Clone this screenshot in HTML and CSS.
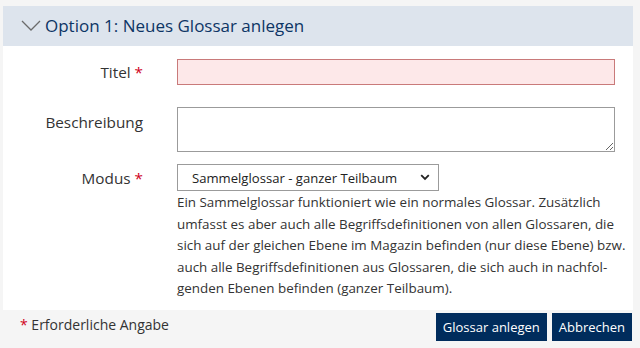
FILE: index.html
```html
<!DOCTYPE html>
<html lang="de">
<head>
<meta charset="utf-8">
<link rel="stylesheet" href="styles.css">
</head>
<body>
<div class="panel">
  <div class="panel-head">
    <svg class="chev" width="20" height="12" viewBox="0 0 20 12"><path d="M1 1 L10 10 L19 1" fill="none" stroke="#6b6b6b" stroke-width="1.3"/></svg>
    <h2 class="panel-title">Option 1: Neues Glossar anlegen</h2>
  </div>
  <div class="form">
    <label class="lbl lbl-title">Titel <span class="req">*</span></label>
    <div class="field"><input class="inp inp-error" type="text"></div>
    <label class="lbl lbl-desc">Beschreibung</label>
    <div class="field"><textarea class="ta"></textarea></div>
    <label class="lbl lbl-mode">Modus <span class="req">*</span></label>
    <div class="field">
      <div class="sel">
        <span>Sammelglossar - ganzer Teilbaum</span>
        <svg width="10" height="7" viewBox="0 0 10 7"><path d="M1.2 1.2 L5 5 L8.8 1.2" fill="none" stroke="#222" stroke-width="1.8"/></svg>
      </div>
      <p class="help">Ein Sammelglossar funktioniert wie ein normales Glossar. Zusätzlich<br>umfasst es aber auch alle Begriffsdefinitionen von allen Glossaren, die<br>sich auf der gleichen Ebene im Magazin befinden (nur diese Ebene) bzw.<br>auch alle Begriffsdefinitionen aus Glossaren, die sich auch in nachfol-<br>genden Ebenen befinden (ganzer Teilbaum).</p>
    </div>
  </div>
</div>
<div class="footer">
  <div class="req-note"><span class="req">*</span> Erforderliche Angabe</div>
  <div class="btns">
    <button class="btn">Glossar anlegen</button>
    <button class="btn">Abbrechen</button>
  </div>
</div>
</body>
</html>
```
FILE: styles.css
```css
html, body {
  margin: 0;
  padding: 0;
  background: #f5f5f5;
  font-family: "Open Sans", "Noto Sans", sans-serif;
  color: #333;
}
body {
  width: 640px;
  height: 348px;
  overflow: hidden;
}
.panel {
  margin: 6px 7px 0 3px;
  background: #fff;
  height: 304px;
}
.panel-head {
  height: 40px;
  background: #dde4ed;
  display: flex;
  align-items: center;
  padding-left: 18px;
}
.chev {
  margin-right: 4px;
  margin-top: -1px;
}
.panel-title {
  margin: 0;
  font-size: 17px;
  font-weight: 400;
  color: #0d3565;
  line-height: 20px;
}
.form {
  display: grid;
  grid-template-columns: 140px 1fr;
  column-gap: 34px;
  padding: 13px 18px 0 0;
}
.lbl {
  text-align: right;
  font-size: 15.3px;
  line-height: 20px;
  color: #333;
}
.lbl-title { padding-top: 3px; margin-bottom: 22px; }
.lbl-desc { padding-top: 5px; margin-bottom: 12px; }
.lbl-mode { padding-top: 4px; }
.req { color: #d0021b; }
.field { min-width: 0; }
.inp {
  display: block;
  box-sizing: border-box;
  width: 100%;
  height: 26px;
  margin: 0 0 22px 0;
  border: 1px solid #c97a7a;
  background: #fde8e9;
  font: inherit;
}
.ta {
  display: block;
  box-sizing: border-box;
  width: 100%;
  height: 45px;
  margin: 0 0 12px 0;
  border: 1px solid #9b9b9b;
  background: #fff;
  font: inherit;
  resize: vertical;
}
.sel {
  box-sizing: border-box;
  width: 262px;
  height: 27px;
  border: 1px solid #9b9b9b;
  display: flex;
  align-items: center;
  justify-content: space-between;
  padding: 0 8px 0 14px;
  font-size: 13.1px;
  color: #222;
}
.help {
  margin: 1px 0 0 0;
  font-size: 13.4px;
  line-height: 21.5px;
  color: #333;
  white-space: nowrap;
}
.footer {
  display: flex;
  justify-content: space-between;
  align-items: center;
  padding: 3px 8px 0 20px;
}
.req-note {
  font-size: 14px;
  color: #333;
  margin-top: -6px;
}
.btns {
  display: flex;
  gap: 5px;
}
.btn {
  height: 28px;
  border: none;
  background: #002c5c;
  color: #fff;
  font-family: inherit;
  font-size: 13px;
  padding: 0 7px;
}
```
